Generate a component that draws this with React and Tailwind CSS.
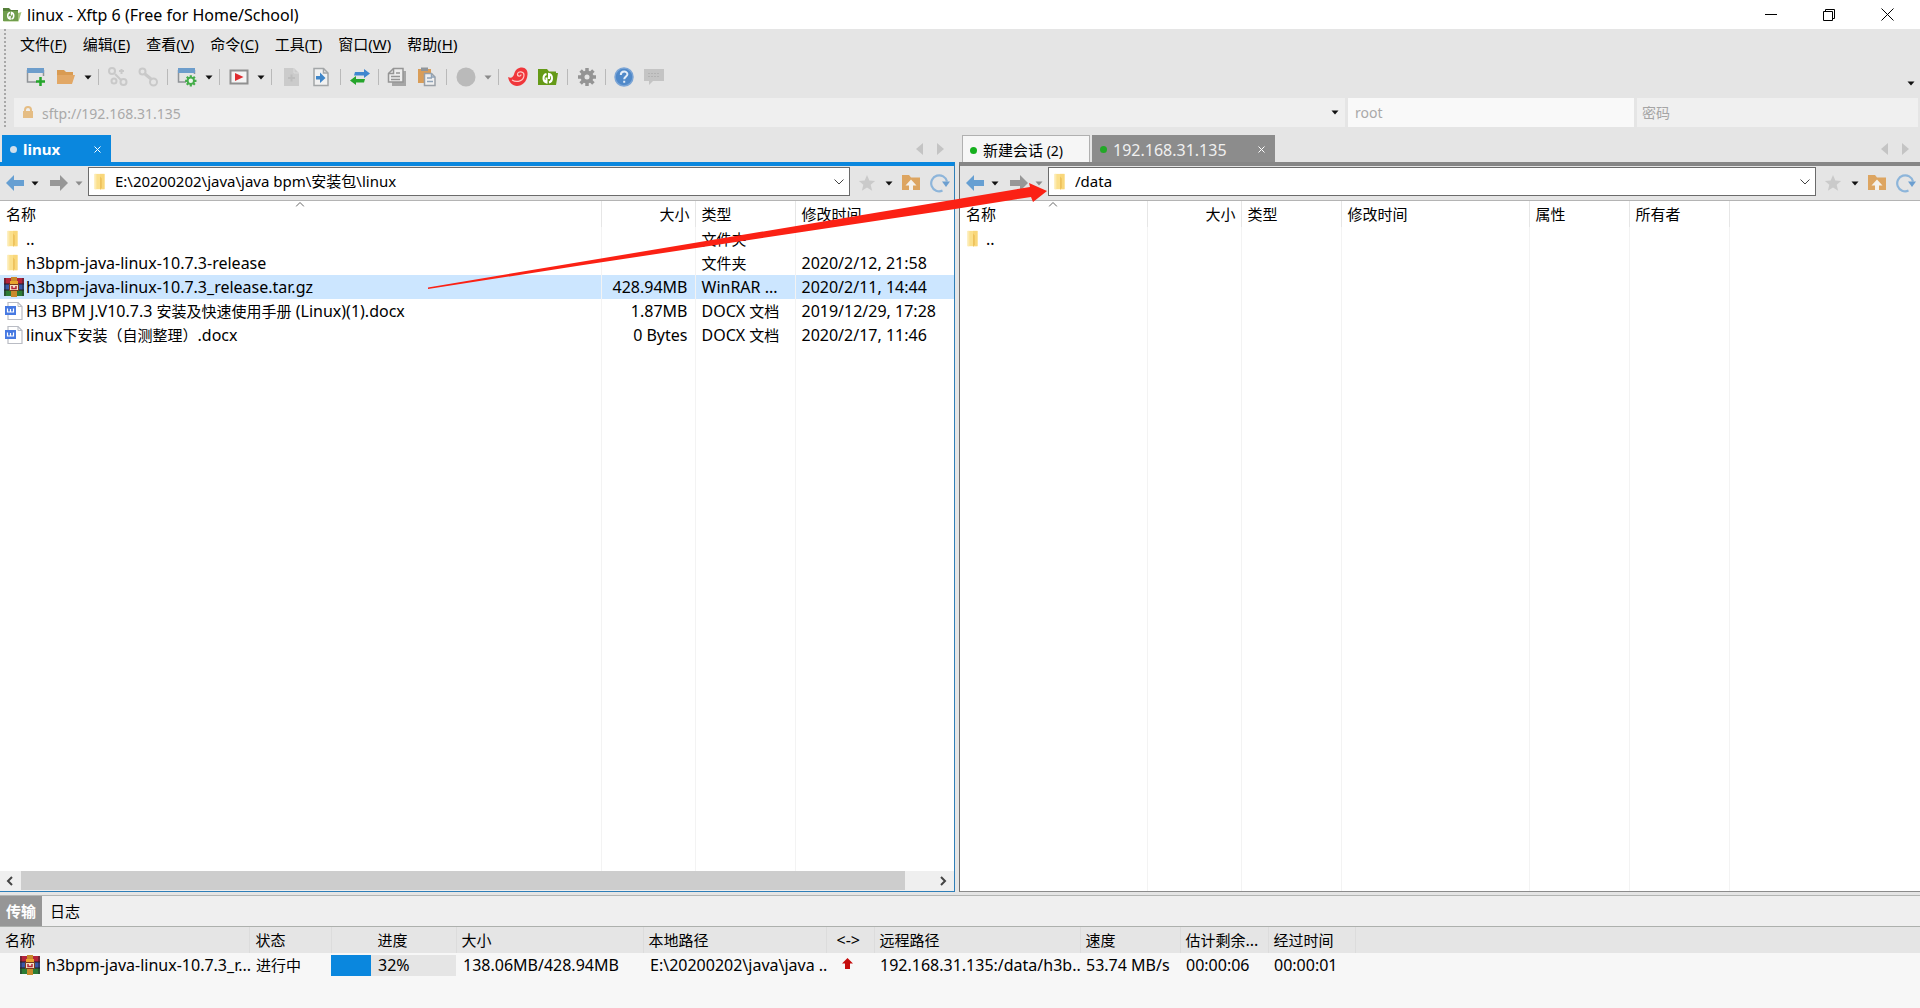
import { Fragment } from "react";

const FONT = "font-['Noto_Sans','Noto_Sans_CJK_SC',sans-serif]";

// Han characters keep one size whatever the latin text next to them
const Txt = ({ children }) =>
  children.split(/([\u3000-\u9fff\uff00-\uffef]+)/).map((part, i) =>
    i % 2 ? (
      <span key={i} className="text-[15px]">{part}</span>
    ) : (
      <Fragment key={i}>{part}</Fragment>
    )
  );

/* ---------- icons ---------- */

const Svg = ({ size = 20, children }) => (
  <svg width={size} height={size} viewBox="0 0 20 20" fill="none" className="shrink-0" aria-hidden="true">
    {children}
  </svg>
);

const Caret = ({ color = "#111" }) => (
  <svg width="8" height="5" viewBox="0 0 8 5" className="shrink-0" aria-hidden="true">
    <path d="M0.5 0.5h7L4 4.5z" fill={color} />
  </svg>
);

const AppIcon = () => (
  <Svg>
    <path d="M1 3h6l2 2h7v3H1z" fill="#557f3a" />
    <path d="M1 6h15v10H1z" fill="#6f9d4c" />
    <path d="M16 8l3.500-1-3 9.500H2L1 16h15z" fill="#a3c47c" />
    <path d="M8 7.500c-3 .5-3 6 0 6.500v-3M9.500 14c3-.5 3-6 0-6.500v3" stroke="#fff" strokeWidth="1.500" />
  </Svg>
);

const NewSession = () => (
  <Svg>
    <path d="M1.500 3v12H11M17.500 3v6" stroke="#8f9397" strokeWidth="1.500" />
    <path d="M1 1h17v5H1z" fill="#6d9dcb" />
    <path d="M14.500 10v9M10 14.500h9" stroke="#25a52b" strokeWidth="2.500" />
  </Svg>
);

const OpenFolder = () => (
  <Svg>
    <path d="M1 3h7l2 2h7v4H1z" fill="#d99b52" />
    <path d="M1 17V8h18l-3 9z" fill="#e2a866" />
  </Svg>
);

const Links = () => (
  <Svg>
    <g stroke="#c9c9c9" strokeWidth="2">
      <circle cx="4" cy="4" r="3" />
      <circle cx="15.500" cy="15" r="3" />
      <circle cx="6" cy="14" r="2.500" />
      <path d="M11 4h5M13.500 2v5M7 7l6 6" />
    </g>
  </Svg>
);

const Unlink = () => (
  <Svg>
    <g stroke="#c9c9c9" strokeWidth="2">
      <circle cx="4.500" cy="4.500" r="3" />
      <circle cx="15.500" cy="15" r="3.500" />
      <path d="M7 7l6 5" strokeWidth="3" />
    </g>
  </Svg>
);

const gearTeeth = "M10 1v18M1 10h18M3.600 3.600l12.800 12.800M16.400 3.600L3.600 16.400";

const WindowGear = () => (
  <Svg>
    <path d="M1.500 3v12H9M17.500 3v4" stroke="#8f9397" strokeWidth="1.500" />
    <path d="M1 1h17v5H1z" fill="#6d9dcb" />
    <g transform="translate(7.500 7.500) scale(.63)">
      <path d={gearTeeth} stroke="#45ad4a" strokeWidth="3.500" />
      <circle cx="10" cy="10" r="5" fill="#eef5ee" stroke="#45ad4a" strokeWidth="3" />
    </g>
  </Svg>
);

const Play = () => (
  <Svg>
    <path d="M1.500 3.500h17v13h-17z" fill="#f4f4f4" stroke="#909090" strokeWidth="2" />
    <path d="M6 6l8.500 4L6 14z" fill="#e02b2f" />
  </Svg>
);

const DocBlank = () => (
  <Svg>
    <path d="M3 1h10l5 5v13H3z" fill="#cbcbcb" />
    <path d="M13 1v5h5" stroke="#dcdcdc" />
    <path d="M7 11h7M10.500 7.500v7" stroke="#bdbdbd" strokeWidth="2" />
  </Svg>
);

const DocArrow = () => (
  <Svg>
    <path d="M3 1.500h9.500l4.500 4.500v12.500H3z" fill="#f1f1f1" stroke="#a3a6a8" strokeWidth="1.500" />
    <path d="M12.500 1.500V6H17" stroke="#a3a6a8" strokeWidth="1.500" />
    <path d="M5 9h4V5.500l5.500 5.500L9 16v-3.500H5z" fill="#3f86c9" />
  </Svg>
);

const Swap = () => (
  <Svg>
    <path d="M5 5h9V2l6 4.500L14 11V8.500H4z" fill="#3f87cf" />
    <path d="M15 12H6V9L0 13.500 6 18v-2.500h8z" fill="#25a52b" />
  </Svg>
);

const Copy = () => (
  <Svg>
    <path d="M7 4h12v15H5v-3" fill="#a6a6a6" />
    <path d="M6.500 1.500H16V15H1.500V6.500z" fill="#ededed" stroke="#959595" strokeWidth="1.500" />
    <path d="M6.500 1.500v5h-5M4 9.500h9M4 12.500h9M9 6h4" stroke="#959595" strokeWidth="1.500" />
  </Svg>
);

const Paste = () => (
  <Svg>
    <path d="M1 2h13v14H1z" fill="#d99d58" />
    <path d="M4 0.500h7V4H4z" fill="#8f9499" />
    <path d="M7.500 6.500h7L18 10v8.500H7.500z" fill="#f0f0f0" stroke="#9aa0a6" strokeWidth="1.500" />
    <path d="M10 11h5M10 14.500h6M14.500 6.500V10H18" stroke="#8fa3b8" strokeWidth="1.500" />
  </Svg>
);

const Stop = () => (
  <Svg>
    <circle cx="10" cy="10" r="9.500" fill="#bababa" />
  </Svg>
);

const Swirl = () => (
  <Svg>
    <path d="M0 10c3 1.500 5 .5 6-2.500C7 3 10 .5 14 .5c3.500 0 6 3 5.500 7C19 15 14 19 9 19c-4.500 0-8-3.500-9-9z" fill="#f0373b" />
    <path d="M4 13c5 3 12 1 12-5 0-3.500-6-4.500-6.500-1-.3 2.500 3.500 3 3.500.5" stroke="#ffc9c6" strokeWidth="1.200" />
  </Svg>
);

const GreenFolder = () => (
  <Svg>
    <path d="M0 2h9l2 2.500h7V6h2l-2 12H0z" fill="#659a17" />
    <path d="M8.500 7c-4 .8-4 7.700 0 8.500v-5M11 15.500c4-.8 4-7.700 0-8.500v5" stroke="#fff" strokeWidth="2" />
  </Svg>
);

const Gear = () => (
  <Svg>
    <path d={gearTeeth} stroke="#949494" strokeWidth="3.500" />
    <circle cx="10" cy="10" r="4.500" fill="#e5e5e5" stroke="#949494" strokeWidth="4" />
  </Svg>
);

const Help = () => (
  <Svg>
    <circle cx="10" cy="10" r="9" fill="#5089c9" stroke="#7ba5d6" strokeWidth="1.500" />
    <path d="M6.800 8c0-4.500 6.600-4.300 6.600-.7 0 2.300-3.200 2.400-3.200 4.900M10.200 13.800v2" stroke="#e4edf8" strokeWidth="2" />
  </Svg>
);

const Chat = () => (
  <Svg>
    <path d="M0 2h20v12H9l-4 4v-4H0z" fill="#c4c4c4" />
    <path d="M4 6.500h12M4 9.500h12" stroke="#b3b3b3" strokeDasharray="2 1" />
  </Svg>
);

const Folder = () => (
  <Svg size={18}>
    <path d="M4 1h11v17H4z" fill="#fbe08c" />
    <path d="M10 1h5v17h-5z" fill="#f9d77a" />
    <path d="M10 4l2 2v10l-2 3z" fill="#eec25c" />
    <path d="M4 1h2v17H4z" fill="#fdeab0" />
  </Svg>
);

const Rar = () => (
  <Svg>
    <path d="M0 1h20v6H0z" fill="#b5243a" />
    <path d="M0 7h20v6H0z" fill="#3a58a8" />
    <path d="M0 13h20v6H0z" fill="#2c7d35" />
    <path d="M0 1h2v18H0zM18 1h2v18h-2z" fill="#2b2430" opacity=".45" />
    <path d="M0 7h20M0 13h20" stroke="#221c28" />
    <path d="M7 0h6v20H7z" fill="#c98a2b" />
    <path d="M6 4h8v3H6z" fill="#e9a52f" />
    <path d="M5.500 7.500h9v6h-9z" fill="#f3e3c8" stroke="#7b3b1d" />
    <path d="M8 9v2.500h4V9" stroke="#b5243a" strokeWidth="1.500" />
  </Svg>
);

const Docx = () => (
  <Svg>
    <path d="M4 1.500h10l4 4v13H4z" fill="#fff" stroke="#b9bcc4" strokeWidth="1.200" />
    <path d="M14 1.500v4h4" stroke="#b9bcc4" />
    <path d="M1 5h11v9H1z" fill="#4679e2" />
    <path d="M3.500 7.500V11h6V7.500M6.500 8v3" stroke="#fff" strokeWidth="1.200" />
  </Svg>
);

const NavArrow = ({ color, flip }) => (
  <Svg>
    <path d={flip ? "M19 10l-8-8v5H1v6h10v5z" : "M1 10l8-8v5h10v6H9v5z"} fill={color} />
  </Svg>
);

const Star = () => (
  <Svg size={18}>
    <path d="M10 1l2.600 6.200 6.400.5-4.900 4.300 1.600 6.500L10 15l-5.700 3.500 1.600-6.500L1 7.700l6.400-.5z" fill="#cacaca" />
  </Svg>
);

const FolderUp = () => (
  <Svg>
    <path d="M1 2h7l2 2.500h9V17H1z" fill="#dda561" />
    <path d="M10 6.500l5.500 6H12V17H8v-4.500H4.500z" fill="#f4f1ec" />
  </Svg>
);

const Refresh = () => (
  <Svg>
    <path d="M12.500 17.600A8 8 0 1 1 17 8.500" stroke="#8db5da" strokeWidth="2.200" />
    <path d="M12 8.500h8l-4 5.500z" fill="#6c9fd0" />
  </Svg>
);

const Lock = () => (
  <svg width="12" height="14" viewBox="0 0 12 14" fill="none" aria-hidden="true">
    <path d="M3 6V4a3 3 0 0 1 6 0v2" stroke="#e5bd84" strokeWidth="2" />
    <path d="M1 5h10v7H1z" fill="#e5bd84" />
  </svg>
);

/* ---------- top bars ---------- */

const TitleBar = () => (
  <header className="flex h-[29px] shrink-0 items-center bg-white pl-[2px] pr-[4px]">
    <AppIcon />
    <h1 className="grow pl-[5px] text-[16px]">linux - Xftp 6 (Free for Home/School)</h1>
    <button aria-label="最小化" className="flex h-full w-[58px] items-center justify-center">
      <svg width="12" height="12" stroke="#000"><path d="M0 5.500h12" /></svg>
    </button>
    <button aria-label="还原" className="flex h-full w-[58px] items-center justify-center">
      <svg width="12" height="12" fill="none" stroke="#000"><path d="M.5 2.500h9v9h-9zM2.500 2.500v-2h9v9h-2" /></svg>
    </button>
    <button aria-label="关闭" className="flex h-full w-[58px] items-center justify-center">
      <svg width="13" height="13" stroke="#000"><path d="M.5.5l12 12M12.500.5l-12 12" /></svg>
    </button>
  </header>
);

const menus = [
  ["文件", "F"],
  ["编辑", "E"],
  ["查看", "V"],
  ["命令", "C"],
  ["工具", "T"],
  ["窗口", "W"],
  ["帮助", "H"],
];

const MenuBar = () => (
  <nav className="flex h-[30px] items-center gap-4 pl-[14px] text-[15px]">
    {menus.map(([label, key]) => (
      <button key={key} className="whitespace-nowrap">
        {label}(<span className="underline underline-offset-2">{key}</span>)
      </button>
    ))}
  </nav>
);

const tools = [
  ["新建", NewSession],
  ["打开", OpenFolder],
  "caret",
  "sep",
  ["重新连接", Links],
  ["断开", Unlink],
  "sep",
  ["属性", WindowGear],
  "caret",
  "sep",
  ["执行", Play],
  "caret",
  "sep",
  ["新建文件", DocBlank],
  ["传输文件", DocArrow],
  "sep",
  ["同步", Swap],
  "thin",
  ["复制", Copy],
  ["粘贴", Paste],
  "sep",
  ["停止", Stop],
  "faded",
  "sep",
  ["Xshell", Swirl],
  ["Xftp", GreenFolder],
  "sep",
  ["选项", Gear],
  "thin",
  ["帮助", Help],
  ["反馈", Chat],
];

const ToolBar = () => (
  <div className="flex h-9 items-center pl-[15px] pr-[5px]">
    {tools.map((tool, i) => {
      if (tool === "sep" || tool === "thin")
        return (
          <span key={i} className={`flex justify-center ${tool === "sep" ? "w-[9px]" : "w-[7px]"}`}>
            <span className="h-4 w-px bg-[#b9b9b9]" />
          </span>
        );
      if (tool === "caret" || tool === "faded")
        return (
          <button key={i} aria-label="更多" className="flex h-5 w-[13px] items-center justify-center">
            <Caret color={tool === "faded" ? "#8a8a8a" : "#111"} />
          </button>
        );
      const [label, Icon] = tool;
      return (
        <button key={i} aria-label={label} className="flex h-6 w-[30px] items-center justify-center">
          <Icon />
        </button>
      );
    })}
    <button aria-label="工具栏选项" className="mt-3 ml-auto"><Caret /></button>
  </div>
);

const AddressBar = () => (
  <div className="flex h-[29px] gap-[3px] pl-2 pr-[2px] text-[#a9a9a9]">
    <div className="flex grow items-center bg-[#efefef] pl-2 pr-[6px]">
      <Lock />
      <input aria-label="地址" defaultValue="sftp://192.168.31.135" className="grow pt-[2px] pl-2 outline-none" />
      <button aria-label="历史"><Caret /></button>
    </div>
    <input
      aria-label="用户名"
      defaultValue="root"
      className="w-[286px] bg-[#f9f9f9] px-[7px] outline-none"
    />
    <input
      type="password"
      aria-label="密码"
      placeholder="密码"
      className="w-[281px] bg-[#f0f0f0] px-[5px] outline-none placeholder:text-[#a5a5a5]"
    />
  </div>
);

/* ---------- file panes ---------- */

const TabArrows = () => (
  <div className="ml-auto flex items-center gap-[14px] pr-[11px]">
    <button aria-label="上一个标签">
      <svg width="7" height="12"><path d="M7 0v12L0 6z" fill="#c4c4c4" /></svg>
    </button>
    <button aria-label="下一个标签">
      <svg width="7" height="12"><path d="M0 0v12l7-6z" fill="#c4c4c4" /></svg>
    </button>
  </div>
);

const CloseX = () => (
  <svg width="7" height="7" stroke="#fff"><path d="M.5.5l6 6M6.500.5l-6 6" /></svg>
);

const PathBar = ({ path }) => (
  <div className="flex h-[34px] shrink-0 items-center bg-[#e5e5e5] pl-[5px] pr-1">
    <button aria-label="后退"><NavArrow color="#669fd2" /></button>
    <button aria-label="后退历史" className="px-[6px]"><Caret /></button>
    <button aria-label="前进" className="pl-1"><NavArrow color="#979797" flip /></button>
    <button aria-label="前进历史" className="pr-[5px] pl-[6px]"><Caret color="#8c8c8c" /></button>
    <div className="mt-px flex h-[29px] grow items-center self-start border border-[#6b6b6b] bg-white pr-[5px]">
      <span className="pl-[2px]"><Folder /></span>
      <input aria-label="路径" defaultValue={path} className="min-w-0 grow pl-[6px] text-[15px] outline-none" />
      <button aria-label="展开路径">
        <svg width="10" height="6" fill="none" stroke="#444"><path d="M.5.5L5 5 9.500.5" /></svg>
      </button>
    </div>
    <div className="flex w-[100px] shrink-0 items-center justify-between pl-2">
      <button aria-label="收藏"><Star /></button>
      <button aria-label="收藏列表"><Caret /></button>
      <button aria-label="上级目录"><FolderUp /></button>
      <button aria-label="刷新"><Refresh /></button>
    </div>
  </div>
);

const SortMark = () => (
  <svg width="9" height="5" fill="none" stroke="#666" className="absolute top-px left-1/2 -translate-x-1/2">
    <path d="M.5 4.500l4-4 4 4" />
  </svg>
);

const icons = { folder: Folder, rar: Rar, docx: Docx };

const FileTable = ({ columns, rows }) => (
  <table className="h-full w-full table-fixed border-collapse bg-white">
    <colgroup>
      {columns.map((c) => <col key={c.label} className={c.width} />)}
    </colgroup>
    <thead>
      <tr className="h-[26px]">
        {columns.map((c, i) => (
          <th
            key={c.label}
            className={`relative border-r border-[#e6e6e6] font-normal last:border-r-0 ${c.right ? "pr-[5px] text-right" : "pl-[6px] text-left"}`}
          >
            {i === 0 && <SortMark />}
            <Txt>{c.label}</Txt>
          </th>
        ))}
      </tr>
    </thead>
    <tbody>
      {rows.map((row) => {
        const Icon = icons[row.icon];
        return (
          <tr key={row.cells[0]} className={`h-6 text-[16px] leading-5 ${row.selected ? "bg-[#cce6ff]" : ""}`}>
            {columns.map((c, i) => (
              <td
                key={c.label}
                className={`truncate border-r border-[#f3f3f3] last:border-r-0 ${c.right ? "pr-[7px] text-right" : i ? "pl-[6px]" : "pl-1"}`}
              >
                {i === 0 ? (
                  <span className="flex h-5 items-center">
                    <span className="flex w-[22px] items-center"><Icon /></span>
                    <span><Txt>{row.cells[0]}</Txt></span>
                  </span>
                ) : (
                  <Txt>{row.cells[i] || ""}</Txt>
                )}
              </td>
            ))}
          </tr>
        );
      })}
      <tr>
        {columns.map((c) => (
          <td key={c.label} className="border-r border-[#f3f3f3] last:border-r-0" />
        ))}
      </tr>
    </tbody>
  </table>
);

const localColumns = [
  { label: "名称", width: "w-[601px]" },
  { label: "大小", width: "w-[94px]", right: true },
  { label: "类型", width: "w-[100px]" },
  { label: "修改时间", width: "w-auto" },
];

const localRows = [
  { icon: "folder", cells: ["..", "", "文件夹", ""] },
  { icon: "folder", cells: ["h3bpm-java-linux-10.7.3-release", "", "文件夹", "2020/2/12, 21:58"] },
  {
    icon: "rar",
    selected: true,
    cells: ["h3bpm-java-linux-10.7.3_release.tar.gz", "428.94MB", "WinRAR ...", "2020/2/11, 14:44"],
  },
  {
    icon: "docx",
    cells: ["H3 BPM J.V10.7.3 安装及快速使用手册 (Linux)(1).docx", "1.87MB", "DOCX 文档", "2019/12/29, 17:28"],
  },
  { icon: "docx", cells: ["linux下安装（自测整理）.docx", "0 Bytes", "DOCX 文档", "2020/2/17, 11:46"] },
];

const remoteColumns = [
  { label: "名称", width: "w-[187px]" },
  { label: "大小", width: "w-[94px]", right: true },
  { label: "类型", width: "w-[100px]" },
  { label: "修改时间", width: "w-[188px]" },
  { label: "属性", width: "w-[100px]" },
  { label: "所有者", width: "w-[100px]" },
  { label: "", width: "w-auto" },
];

const ScrollBar = () => (
  <div className="flex h-5 shrink-0 items-stretch bg-[#efefef]">
    <button aria-label="向左滚动" className="flex w-[21px] items-center justify-center pr-[2px]">
      <svg width="7" height="10" fill="none" stroke="#444" strokeWidth="2"><path d="M6 1L2 5l4 4" /></svg>
    </button>
    <div className="grow pr-7"><div className="h-[19px] bg-[#cdcdcd]" /></div>
    <button aria-label="向右滚动" className="flex w-[21px] items-center justify-center">
      <svg width="7" height="10" fill="none" stroke="#444" strokeWidth="2"><path d="M1 1l4 4-4 4" /></svg>
    </button>
  </div>
);

const LocalPane = () => (
  <section className="flex min-w-0 flex-col">
    <div className="flex h-[27px] shrink-0 pl-[2px]">
      <div className="flex w-[109px] items-center bg-[#0a87de] pt-[2px] pr-[10px] pl-2 text-[15px] text-white">
        <span className="h-[7px] w-[7px] rounded-full bg-[#cfdfec]" />
        <button className="grow pl-[6px] text-left font-bold">linux</button>
        <button aria-label="关闭标签"><CloseX /></button>
      </div>
      <TabArrows />
    </div>
    <div className="flex min-h-0 grow flex-col border-t-4 border-r border-b border-t-[#0a87de] border-r-[#2f7fb8] border-b-[#2f7fb8]">
      <PathBar path="E:\20200202\java\java bpm\安装包\linux" />
      <div className="min-h-0 grow border-t border-[#b4b4b4]">
        <FileTable columns={localColumns} rows={localRows} />
      </div>
      <ScrollBar />
    </div>
  </section>
);

const RemotePane = () => (
  <section className="flex min-w-0 flex-col">
    <div className="flex h-[27px] shrink-0 gap-[2px] pl-[3px]">
      <div className="flex w-[128px] items-center border-t border-r border-l border-[#b0b0b0] bg-[#f6f6f6] pt-[2px] pl-[7px]">
        <span className="h-[7px] w-[7px] rounded-full bg-[#16b01e]" />
        <button className="pl-[6px] whitespace-nowrap"><Txt>新建会话 (2)</Txt></button>
      </div>
      <div className="flex w-[183px] items-center bg-[#8c8c8c] pt-[2px] pr-[10px] pl-2 text-[16px] text-[#f0f0f0]">
        <span className="h-[7px] w-[7px] rounded-full bg-[#22a827]" />
        <button className="grow pl-[6px] text-left">192.168.31.135</button>
        <button aria-label="关闭标签"><CloseX /></button>
      </div>
      <TabArrows />
    </div>
    <div className="flex min-h-0 grow flex-col border-t-4 border-b border-l border-t-[#868686] border-b-[#8c8c8c] border-l-[#6f6f6f]">
      <PathBar path="/data" />
      <div className="min-h-0 grow border-t border-[#b4b4b4]">
        <FileTable columns={remoteColumns} rows={[{ icon: "folder", cells: [".."] }]} />
      </div>
    </div>
  </section>
);

/* ---------- transfer queue ---------- */

const queueColumns = [
  ["名称", "w-[249px] pl-[5px]"],
  ["状态", "w-[82px] pl-[6px]"],
  ["进度", "w-[125px] pl-[46px]"],
  ["大小", "w-[187px] pl-[5px]"],
  ["本地路径", "w-[183px] pl-[5px]"],
  ["<->", "w-[48px] pl-[10px]"],
  ["远程路径", "w-[206px] pl-[5px]"],
  ["速度", "w-[100px] pl-[5px]"],
  ["估计剩余...", "w-[88px] pl-[5px]"],
  ["经过时间", "w-[87px] pl-[5px]"],
  ["", "w-auto"],
];

const percent = 32;

const Queue = () => (
  <footer className="h-[113px] shrink-0 border-t border-[#b3b5b3] bg-[#f7f7f7]">
    <div className="flex h-[31px] border-b border-[#adb0ad] bg-[#efefef]">
      <button className="w-[42px] bg-[#969696] font-bold text-white"><Txt>传输</Txt></button>
      <button className="px-2"><Txt>日志</Txt></button>
    </div>
    <table className="w-full table-fixed border-collapse text-[16px] leading-5 whitespace-nowrap">
      <thead>
        <tr className="h-[26px] bg-[#e5e5e5]">
          {queueColumns.map(([label, cls]) => (
            <th key={label} className={`border-r border-[#dcdcdc] text-left font-normal last:border-r-0 ${cls}`}>
              <Txt>{label}</Txt>
            </th>
          ))}
        </tr>
      </thead>
      <tbody>
        <tr className="h-6">
          <td className="pl-5">
            <span className="flex items-center gap-[6px]"><Rar />h3bpm-java-linux-10.7.3_r...</span>
          </td>
          <td className="pl-[7px]"><Txt>进行中</Txt></td>
          <td>
            <div className="flex h-[21px] items-center bg-[#e5e5e5]">
              <div className="h-full bg-[#0a87de]" style={{ width: `${percent}%` }} />
              <span className="pl-[7px]">{percent}%</span>
            </div>
          </td>
          <td className="pl-[7px]">138.06MB/428.94MB</td>
          <td className="pl-[7px]">E:\20200202\java\java ..</td>
          <td className="pb-1 pl-4">
            <svg width="11" height="11" className="block"><path d="M5.500 0L11 5.500H8V11H3V5.500H0z" fill="#c50d0d" /></svg>
          </td>
          <td className="pl-[6px]">192.168.31.135:/data/h3b..</td>
          <td className="pl-[6px]">53.74 MB/s</td>
          <td className="pl-[6px]">00:00:06</td>
          <td className="pl-[6px]">00:00:01</td>
          <td />
        </tr>
      </tbody>
    </table>
  </footer>
);

export default function App() {
  return (
    <div className={`relative flex h-screen flex-col overflow-hidden bg-[#e5e5e5] text-[14px] text-black ${FONT}`}>
      <TitleBar />
      <div className="flex shrink-0">
        <div className="ml-1 w-[2px] border-l-2 border-dotted border-[#a8a8a8]" />
        <div className="min-w-0 grow">
          <MenuBar />
          <ToolBar />
          <div className="pt-[3px]"><AddressBar /></div>
        </div>
      </div>
      <main className="grid min-h-0 grow grid-cols-[955fr_961fr] gap-1 pt-2 pb-[3px]">
        <LocalPane />
        <RemotePane />
      </main>
      <Queue />

      {/* drag arrow from the archive to the remote folder */}
      <svg
        width="624"
        height="112"
        viewBox="426 180 624 112"
        className="pointer-events-none absolute top-[180px] left-[426px]"
        aria-hidden="true"
      >
        <path d="M428 287.500L580 262 1030 187 1029 183 1047 191 1033 202 1031 197 955 209 580 265.500 428 289z" fill="#fb2114" />
      </svg>
    </div>
  );
}
